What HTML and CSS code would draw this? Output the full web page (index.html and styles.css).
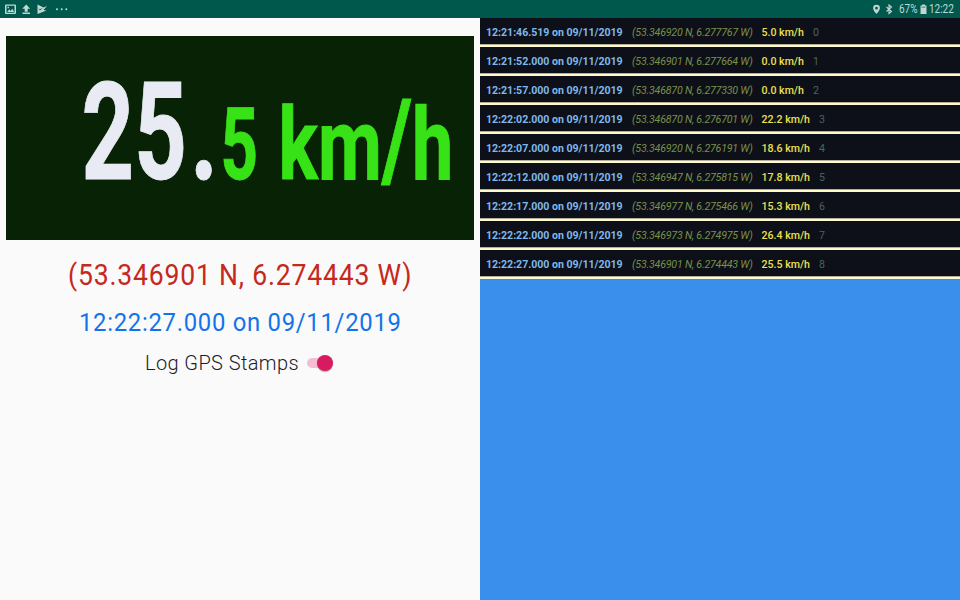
FILE: index.html
```html
<!DOCTYPE html>
<html lang="en">
<head>
<meta charset="utf-8">
<title>GPS Speed</title>
<link rel="stylesheet" href="styles.css">
</head>
<body>
<header class="status">
  <div class="status-left">
    <svg width="70" height="18" viewBox="0 0 70 18">
      <path fill-rule="evenodd" d="M6 4.500h9q1 0 1 1v7.500q0 1-1 1H6q-1 0-1-1V5.500q0-1 1-1zm.5 1.300v6.900h8V5.800zM7.200 12l2-2.700 1.500 1.600 1.600-2.200 1.900 3.300zM7.500 6.800h1.500v1.500H7.500z"/>
      <path d="M26.200 4.500l4 4.200h-2.500v3h-3v-3h-2.500zM22.500 12.600h7.500v1.400h-7.500z"/>
      <path fill-rule="evenodd" d="M37.500 4.500L43.500 7.500 47 6l-3.500 4 3 .5-9 3.500zM38.500 8.500l1.500 2 3-2.700-3 1.400z"/>
      <circle cx="57" cy="9.300" r="1"/><circle cx="61.700" cy="9.300" r="1"/><circle cx="66.300" cy="9.300" r="1"/>
    </svg>
  </div>
  <div class="status-right">
    <svg width="24" height="18" viewBox="0 0 24 18">
      <path fill-rule="evenodd" d="M5.500 4.700a3.400 3.400 0 0 1 3.400 3.400c0 2.500-3.400 5.900-3.400 5.900s-3.400-3.400-3.400-5.900a3.400 3.400 0 0 1 3.400-3.400zm0 2.100a1.400 1.400 0 1 0 0 2.800 1.400 1.400 0 0 0 0-2.800z"/>
      <path class="line" d="M15.500 7l5 4.500-2.500 2V5l2.500 2-5 4.500"/>
    </svg>
    <span class="pct">67%</span>
    <svg class="battery" width="7" height="18" viewBox="0 0 7 18"><path d="M2 4.500h3v1h1.500V14h-6V5.500H2z"/><path class="empty" d="M1.500 6.500h4V8h-4z"/></svg>
    <span class="clock">12:22</span>
  </div>
</header>
<main>
  <section class="dash">
    <svg class="speed" width="468" height="204" viewBox="6 36 468 204">
      <text class="whole" transform="translate(81.500 178.700) scale(.68 1)">25</text>
      <text class="whole dot" transform="translate(190 178.700) scale(.72 1)">.</text>
      <text class="part" transform="translate(220.500 178.700) scale(.647 1)">5</text>
      <text class="part" transform="translate(278.500 178.700) scale(.73 1)">km<tspan class="slash" dy="-1">/</tspan><tspan dy="1">h</tspan></text>
    </svg>
    <div class="coords"><span>(53.346901 N, 6.274443 W)</span></div>
    <div class="stamp"><span>12:22:27.000 on 09/11/2019</span></div>
    <div class="toggle"><span class="label">Log GPS Stamps</span><span class="switch"><i></i></span></div>
  </section>
  <section class="log">
    <div class="row"><b>12:21:46.519 on 09/11/2019</b><em>(53.346920 N, 6.277767 W)</em><span class="kmh">5.0 km/h</span><span class="n">0</span></div>
    <div class="row"><b>12:21:52.000 on 09/11/2019</b><em>(53.346901 N, 6.277664 W)</em><span class="kmh">0.0 km/h</span><span class="n">1</span></div>
    <div class="row"><b>12:21:57.000 on 09/11/2019</b><em>(53.346870 N, 6.277330 W)</em><span class="kmh">0.0 km/h</span><span class="n">2</span></div>
    <div class="row"><b>12:22:02.000 on 09/11/2019</b><em>(53.346870 N, 6.276701 W)</em><span class="kmh">22.2 km/h</span><span class="n">3</span></div>
    <div class="row"><b>12:22:07.000 on 09/11/2019</b><em>(53.346920 N, 6.276191 W)</em><span class="kmh">18.6 km/h</span><span class="n">4</span></div>
    <div class="row"><b>12:22:12.000 on 09/11/2019</b><em>(53.346947 N, 6.275815 W)</em><span class="kmh">17.8 km/h</span><span class="n">5</span></div>
    <div class="row"><b>12:22:17.000 on 09/11/2019</b><em>(53.346977 N, 6.275466 W)</em><span class="kmh">15.3 km/h</span><span class="n">6</span></div>
    <div class="row"><b>12:22:22.000 on 09/11/2019</b><em>(53.346973 N, 6.274975 W)</em><span class="kmh">26.4 km/h</span><span class="n">7</span></div>
    <div class="row"><b>12:22:27.000 on 09/11/2019</b><em>(53.346901 N, 6.274443 W)</em><span class="kmh">25.5 km/h</span><span class="n">8</span></div>
  </section>
</main>
</body>
</html>
```
FILE: styles.css
```css
* { box-sizing: border-box; }
body { margin: 0; height: 600px; overflow: hidden; font-family: Roboto, sans-serif; background: #fafafa; }
svg { display: block; }
.status { height: 18px; background: #00574b; color: #bfd8d3; fill: #bfd8d3; display: flex; justify-content: space-between; }
.status-right { display: flex; padding-right: 6px; font-size: 12px; line-height: 19px; }
.status-right span { white-space: nowrap; transform-origin: left; transform: scaleX(.83); }
.line { fill: none; stroke: #bfd8d3; stroke-width: 1.1; }
.pct { width: 19px; margin-left: 4px; }
.battery { margin-left: 2px; }
.empty { fill: #6a9c93; }
.clock { width: 25px; margin-left: 2px; }
main { display: grid; grid-template-columns: 480px 480px; height: 582px; }
.dash { padding: 18px 6px 0; display: flex; flex-direction: column; align-items: center; }
.speed { background: #082205; font-weight: 700; }
.whole { font-size: 135px; fill: #e8ebf4; stroke: #e8ebf4; stroke-width: .9px; }
.part { font-size: 101px; fill: #37e316; stroke: #37e316; stroke-width: .9px; }
.slash { font-size: 112px; }
.coords, .stamp { white-space: nowrap; display: flex; justify-content: center; }
.coords span, .stamp span { transform: scaleX(.9); }
.coords { height: 40px; margin-top: 15px; color: #c5281c; font-size: 29.500px; line-height: 40px; letter-spacing: .9px; }
.stamp { height: 36px; margin-top: 9px; color: #1273eb; font-size: 26.500px; line-height: 35px; letter-spacing: .8px; }
.toggle { display: flex; align-items: center; height: 30px; margin-top: 8px; margin-right: 2px; gap: 8px; color: #1b1b2b; }
.label { font-size: 20px; font-weight: 300; letter-spacing: .4px; line-height: 24px; }
.switch { position: relative; width: 26px; height: 16px; display: flex; justify-content: flex-end; align-items: center; }
.switch::before { content: ""; position: absolute; left: 0; top: 3px; width: 22px; height: 10px; border-radius: 5px; background: #f3bed2; }
.switch i { position: relative; width: 16px; height: 16px; border-radius: 50%; background: #d81b60; box-shadow: 0 1px 1px rgba(0,0,0,.3); }
.log { background: #3a8eec; }
.row { height: 29px; display: flex; gap: 9px; padding: 2px 0 0 6px; border-bottom: 2px solid #fffacb; background: #0d1018; box-shadow: inset 0 -1px #b2af9b; font-size: 10.600px; line-height: 25px; white-space: nowrap; }
.row b { width: 137px; color: #7fb8ea; font-weight: 700; letter-spacing: -.03px; }
.row em { width: 120.500px; color: #7b9048; letter-spacing: -.19px; }
.kmh { color: #ece04e; font-weight: 500; }
.n { color: #48655e; }
```
